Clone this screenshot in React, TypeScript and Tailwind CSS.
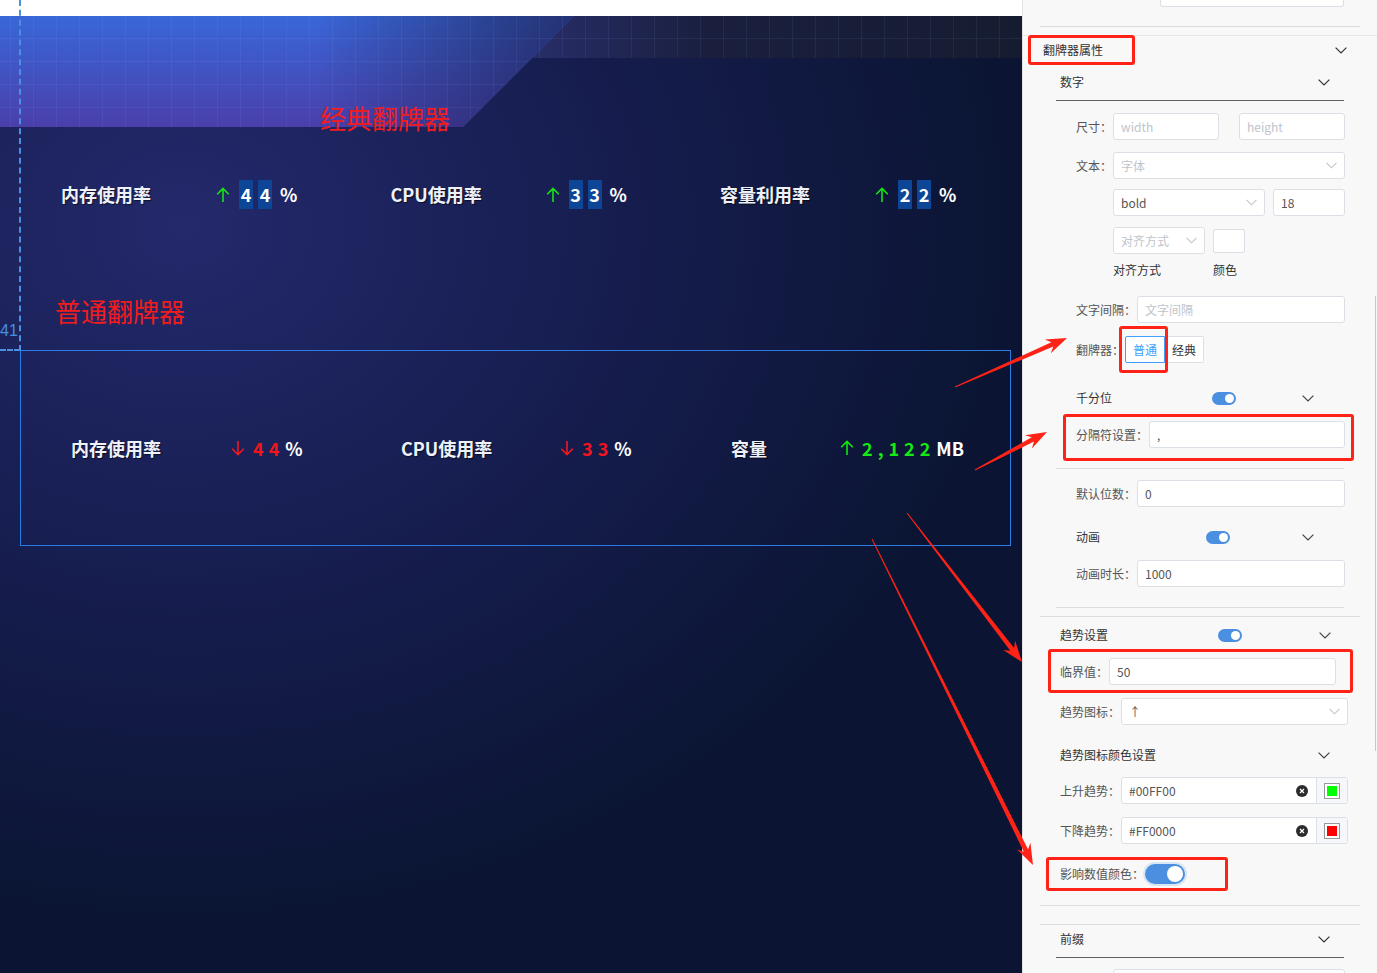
import React from 'react';
import { clsx, type ClassValue } from 'clsx';
import { twMerge } from 'tailwind-merge';

function cn(...inputs: ClassValue[]) {
  return twMerge(clsx(inputs));
}

const font = "font-['Noto_Sans_CJK_SC',sans-serif]";

const UpArrow = () => (
  <svg width="14" height="16" viewBox="0 0 14 16" className="shrink-0">
    <path d="M7 1.5V15M1.2 7.3L7 1.5L12.8 7.3" stroke="#14e614" strokeWidth="1.6" fill="none" />
  </svg>
);

const DownArrow = () => (
  <svg width="14" height="16" viewBox="0 0 14 16" className="shrink-0">
    <path d="M7 1V14.5M1.2 8.7L7 14.5L12.8 8.7" stroke="#f01820" strokeWidth="1.6" fill="none" />
  </svg>
);

const classicItems = [
  { label: '内存使用率', digits: ['4', '4'] },
  { label: 'CPU使用率', digits: ['3', '3'] },
  { label: '容量利用率', digits: ['2', '2'] },
];

const normalItems = [
  { label: '内存使用率', w: 160, up: false, digits: ['4', '4'], unit: '%' },
  { label: 'CPU使用率', w: 159, up: false, digits: ['3', '3'], unit: '%' },
  { label: '容量', w: 109, up: true, digits: ['2', ',', '1', '2', '2'], unit: 'MB' },
];

const labelCls = 'shrink-0 text-[18px] font-bold text-[#eef1f8] leading-[29px] [text-shadow:1px_1px_1px_rgba(0,0,0,0.55)]';

function HeaderArt() {
  return (
    <svg width="1022" height="112" className="absolute left-0 top-0">
      <defs>
        <linearGradient id="hdrV" x1="0" y1="0" x2="0" y2="1">
          <stop offset="0" stopColor="#3967d8" />
          <stop offset="1" stopColor="#4a3fab" />
        </linearGradient>
        <linearGradient id="hdrH" x1="0" y1="0" x2="574" y2="0" gradientUnits="userSpaceOnUse">
          <stop offset="0.55" stopColor="#1c2050" stopOpacity="0" />
          <stop offset="1" stopColor="#1c2050" stopOpacity="0.75" />
        </linearGradient>
        <linearGradient id="strip" x1="500" y1="0" x2="1022" y2="0" gradientUnits="userSpaceOnUse">
          <stop offset="0" stopColor="#2a3070" />
          <stop offset="0.4" stopColor="#1a1f3e" />
          <stop offset="1" stopColor="#161c30" />
        </linearGradient>
        <pattern id="grid" x="10" y="-1" width="23" height="23" patternUnits="userSpaceOnUse">
          <path d="M0 0V23M0 0H23" stroke="rgba(150,170,255,0.16)" strokeWidth="1" fill="none" />
        </pattern>
      </defs>
      <rect x="0" y="0" width="1022" height="42" fill="url(#strip)" />
      <polygon points="0,0 574,0 463,111 0,111" fill="url(#hdrV)" />
      <polygon points="0,0 574,0 463,111 0,111" fill="url(#hdrH)" />
      <polygon points="0,0 1022,0 1022,42 532,42 463,111 0,111" fill="url(#grid)" />
    </svg>
  );
}

function Canvas() {
  return (
    <div className={cn('w-[1022px] h-[973px] flex flex-col relative shrink-0', font)}>
      <div className="h-[16px] bg-white shrink-0" />
      <div className="flex-1 relative bg-[radial-gradient(ellipse_95%_85%_at_18%_22%,#23296b_0%,#161d4e_45%,#0b1533_85%)]">
        <HeaderArt />
        <div className="relative flex flex-col">
          <div className="mt-[87px] pl-[320px] h-[30px] leading-[30px] text-[26px] text-[#f21c1c]">经典翻牌器</div>
          <div className="mt-[47px] flex pl-[61px] h-[29px] items-center">
            {classicItems.map((it) => (
              <div key={it.label} className="w-[329.5px] shrink-0 flex items-center">
                <div className={cn('w-[155px]', labelCls)}>{it.label}</div>
                <UpArrow />
                <div className="ml-[9px] flex gap-[5px]">
                  {it.digits.map((d, i) => (
                    <div key={i} className="w-[14px] h-[29px] bg-[#0d4597] text-white text-[18px] font-bold leading-[29px] text-center">
                      {d}
                    </div>
                  ))}
                </div>
                <div className="ml-[8px] text-white text-[18px] font-bold leading-[29px]">%</div>
              </div>
            ))}
          </div>
          <div className="mt-[87px] pl-[55px] h-[30px] leading-[30px] text-[26px] text-[#f21c1c]">普通翻牌器</div>
          <div className="mt-[24px] ml-[20px] w-[991px] h-[196px] border border-[#2a7be4] flex items-center pl-[50px] overflow-hidden">
            {normalItems.map((it) => (
              <div key={it.label} className="w-[330px] shrink-0 flex items-center">
                <div className={labelCls} style={{ width: it.w }}>{it.label}</div>
                {it.up ? <UpArrow /> : <DownArrow />}
                <div className="ml-[8px] flex gap-[5px]">
                  {it.digits.map((d, i) => (
                    <span key={i} className={cn('text-[18px] font-bold leading-[29px]', it.up ? 'text-[#14eb14]' : 'text-[#f4141e]')}>
                      {d}
                    </span>
                  ))}
                </div>
                <div className="ml-[6px] text-white text-[18px] font-bold leading-[29px]">{it.unit}</div>
              </div>
            ))}
          </div>
        </div>
      </div>
      {/* ruler guide */}
      <div className="absolute left-[19px] top-0 h-[351px] border-l-2 border-dashed border-[#4a8fe0]" />
      <div className="absolute left-0 top-[349px] w-[20px] border-t-2 border-dashed border-[#4a8fe0]" />
      <div className="absolute left-0 top-[321px] text-[16px] leading-[20px] text-[#4a8fe0] font-['Liberation_Sans',sans-serif]">41</div>
    </div>
  );
}

const Chevron = ({ className }: { className?: string }) => (
  <svg width="12" height="7" viewBox="0 0 12 7" className={cn('shrink-0', className)}>
    <polyline points="0.6,0.6 6,6 11.4,0.6" fill="none" stroke="currentColor" strokeWidth="1.2" />
  </svg>
);

function Label({ children, className }: { children: React.ReactNode; className?: string }) {
  return <span className={cn('shrink-0 text-[12px] leading-[20px] text-[#555] whitespace-nowrap', className)}>{children}</span>;
}

function Input({ value, placeholder, className, select }: { value?: string; placeholder?: string; className?: string; select?: boolean }) {
  return (
    <div className={cn('h-[27px] border border-[#dcdfe6] bg-white rounded-[3px] flex items-center px-[7px] text-[12px] shrink-0', className)}>
      <span className={cn('flex-1', value ? 'text-[#555]' : 'text-[#c0c4cc]')}>{value ?? placeholder}</span>
      {select && <Chevron className="text-[#c0c4cc] w-[11px]" />}
    </div>
  );
}

function Toggle({ big }: { big?: boolean }) {
  return big ? (
    <div className="shrink-0 w-[40px] h-[20px] rounded-full bg-[#4a8fe0] flex items-center justify-end p-[2px] shadow-[0_0_0_2px_rgba(74,143,224,0.18)]">
      <div className="w-[16px] h-[16px] rounded-full bg-white" />
    </div>
  ) : (
    <div className="shrink-0 w-[24px] h-[13px] rounded-full bg-[#4a8fe0] flex items-center justify-end p-[2px]">
      <div className="w-[9px] h-[9px] rounded-full bg-white" />
    </div>
  );
}

function ColorInput({ value, swatch }: { value: string; swatch: string }) {
  return (
    <div className="w-[227px] h-[27px] border border-[#dcdfe6] bg-white rounded-[3px] flex text-[12px]">
      <div className="flex-1 flex items-center pl-[7px] pr-[8px]">
        <span className="flex-1 text-[#555]">{value}</span>
        <svg width="12" height="12" viewBox="0 0 12 12">
          <circle cx="6" cy="6" r="6" fill="#2b2b2b" />
          <path d="M4 4L8 8M8 4L4 8" stroke="#fff" strokeWidth="1.3" />
        </svg>
      </div>
      <div className="w-[31px] bg-[#f5f7fa] border-l border-[#dcdfe6] flex items-center justify-center">
        <div className="w-[16px] h-[16px] border border-[#999] p-[2px] bg-white">
          <div className="w-full h-full" style={{ background: swatch }} />
        </div>
      </div>
    </div>
  );
}

function Panel() {
  return (
    <div className={cn('w-[355px] h-[973px] bg-[#f8f8f8] border-l border-[#e2e2e2] flex flex-col relative overflow-hidden shrink-0 [&>*]:shrink-0', font)}>
      <div className="ml-[137px] w-[184px] h-[7px] border border-t-0 border-[#dcdfe6] bg-white rounded-b-[3px]" />
      <div className="mt-[19px] mx-[17px] h-px bg-[#dcdcdc]" />
      <div className="mt-[8px] h-px bg-[#e6e6e6]" />
      <div className="h-[28px] flex items-center justify-between pl-[20px] pr-[30px] text-[#333]">
        <span className="text-[12px]">翻牌器属性</span>
        <Chevron />
      </div>
      <div className="mx-[33px] h-[37px] border-b border-[#606266] flex items-center justify-between pl-[4px] pr-[14px] text-[#333]">
        <span className="text-[12px]">数字</span>
        <Chevron />
      </div>

      <div className="mt-[12px] flex items-center pl-[53px]">
        <Label>尺寸：</Label>
        <Input className="ml-px w-[106px]" placeholder="width" />
        <Input className="ml-[20px] w-[106px]" placeholder="height" />
      </div>
      <div className="mt-[12px] flex items-center pl-[53px]">
        <Label>文本：</Label>
        <Input className="ml-px w-[232px]" placeholder="字体" select />
      </div>
      <div className="mt-[10px] flex items-center pl-[90px]">
        <Input className="w-[152px]" value="bold" select />
        <Input className="ml-[8px] w-[72px]" value="18" />
      </div>
      <div className="mt-[11px] flex items-center pl-[90px]">
        <Input className="w-[92px]" placeholder="对齐方式" select />
        <div className="ml-[8px] w-[32px] h-[24px] border border-[#dcdfe6] bg-white rounded-[2px]" />
      </div>
      <div className="mt-[8px] h-[16px] flex items-center pl-[90px]">
        <Label className="w-[100px] text-[#333]">对齐方式</Label>
        <Label className="text-[#333]">颜色</Label>
      </div>
      <div className="mt-[18px] flex items-center pl-[53px]">
        <Label>文字间隔：</Label>
        <Input className="ml-px w-[208px]" placeholder="文字间隔" />
      </div>
      <div className="mt-[13px] flex items-center pl-[53px]">
        <Label>翻牌器：</Label>
        <div className="ml-px flex text-[12px]">
          <div className="w-[40px] h-[27px] border border-[#409eff] text-[#409eff] flex items-center justify-center rounded-l-[2px] bg-white">普通</div>
          <div className="w-[39px] h-[27px] border border-l-0 border-[#dcdfe6] text-[#333] flex items-center justify-center rounded-r-[2px] bg-white">经典</div>
        </div>
      </div>
      <div className="mt-[25px] h-[20px] flex items-center pl-[53px]">
        <Label className="w-[136px] text-[#333]">千分位</Label>
        <Toggle />
        <Chevron className="ml-[66px] text-[#444]" />
      </div>
      <div className="mt-[13px] flex items-center pl-[53px]">
        <Label>分隔符设置：</Label>
        <Input className="ml-px w-[196px]" value="," />
      </div>
      <div className="mt-[20px] mx-[33px] h-px bg-[#dcdcdc]" />
      <div className="mt-[11px] flex items-center pl-[53px]">
        <Label>默认位数：</Label>
        <Input className="ml-px w-[208px]" value="0" />
      </div>
      <div className="mt-[20px] h-[20px] flex items-center pl-[53px]">
        <Label className="w-[130px] text-[#333]">动画</Label>
        <Toggle />
        <Chevron className="ml-[72px] text-[#444]" />
      </div>
      <div className="mt-[13px] flex items-center pl-[53px]">
        <Label>动画时长：</Label>
        <Input className="ml-px w-[208px]" value="1000" />
      </div>
      <div className="mt-[20px] mx-[33px] h-px bg-[#dcdcdc]" />
      <div className="mt-[8px] mx-[17px] h-px bg-[#dcdcdc]" />

      <div className="mt-[8px] h-[20px] flex items-center pl-[37px]">
        <Label className="w-[158px] text-[#333]">趋势设置</Label>
        <Toggle />
        <Chevron className="ml-[77px] text-[#444]" />
      </div>
      <div className="mt-[13px] flex items-center pl-[37px]">
        <Label>临界值：</Label>
        <Input className="ml-px w-[227px]" value="50" />
      </div>
      <div className="mt-[13px] flex items-center pl-[37px]">
        <Label>趋势图标：</Label>
        <Input className="ml-px w-[227px]" value="↑" select />
      </div>
      <div className="mt-[20px] h-[20px] flex items-center justify-between pl-[37px] pr-[47px]">
        <Label className="text-[#333]">趋势图标颜色设置</Label>
        <Chevron className="text-[#444]" />
      </div>
      <div className="mt-[12px] flex items-center pl-[37px]">
        <Label>上升趋势：</Label>
        <div className="ml-px"><ColorInput value="#00FF00" swatch="#00ff00" /></div>
      </div>
      <div className="mt-[13px] flex items-center pl-[37px]">
        <Label>下降趋势：</Label>
        <div className="ml-px"><ColorInput value="#FF0000" swatch="#ff0000" /></div>
      </div>
      <div className="mt-[20px] flex items-center pl-[37px]">
        <Label>影响数值颜色：</Label>
        <div className="ml-px"><Toggle big /></div>
      </div>
      <div className="mt-[21px] mx-[17px] h-px bg-[#dcdcdc]" />
      <div className="mt-[18px] mx-[17px] h-px bg-[#dcdcdc]" />
      <div className="mx-[33px] h-[33px] border-b border-[#606266] flex items-center justify-between pl-[4px] pr-[14px] pb-[4px] text-[#333]">
        <span className="text-[12px]">前缀</span>
        <Chevron />
      </div>
      <div className="mt-[11px] ml-[90px] w-[232px] h-[27px] border border-[#dcdfe6] bg-white rounded-[3px]" />
      {/* scrollbar */}
      <div className="absolute right-[1px] top-[296px] w-px h-[455px] bg-[#c8c8c8]" />
    </div>
  );
}

function arrowPoints(x0: number, y0: number, x1: number, y1: number) {
  const dx = x1 - x0;
  const dy = y1 - y0;
  const L = Math.hypot(dx, dy);
  const ux = dx / L;
  const uy = dy / L;
  const nx = -uy;
  const ny = ux;
  const hl = 16;
  const hw = 7.5;
  const sw = 2.4;
  const nk = [x1 - ux * hl, y1 - uy * hl];
  const wg = [x1 - ux * (hl + 5), y1 - uy * (hl + 5)];
  const pts = [
    [x0 + nx * 0.5, y0 + ny * 0.5],
    [nk[0] + nx * sw, nk[1] + ny * sw],
    [wg[0] + nx * hw, wg[1] + ny * hw],
    [x1, y1],
    [wg[0] - nx * hw, wg[1] - ny * hw],
    [nk[0] - nx * sw, nk[1] - ny * sw],
    [x0 - nx * 0.5, y0 - ny * 0.5],
  ];
  return pts.map((p) => p.map((v) => v.toFixed(1)).join(',')).join(' ');
}

const arrows = [
  [955, 387, 1067, 338],
  [975, 470, 1047, 432],
  [907, 513, 1022, 662],
  [872, 539, 1033, 865],
];

const boxes = [
  'left-[1028px] top-[35px] w-[107px] h-[30px]',
  'left-[1119px] top-[326px] w-[49px] h-[47px]',
  'left-[1063px] top-[414px] w-[291px] h-[47px]',
  'left-[1048px] top-[649px] w-[305px] h-[44px]',
  'left-[1046px] top-[857px] w-[182px] h-[34px]',
];

export default function App() {
  return (
    <div className="w-[1377px] h-[973px] flex relative overflow-hidden">
      <Canvas />
      <Panel />
      {boxes.map((b) => (
        <div key={b} className={cn('absolute border-[3px] border-[#ff2216] rounded-[3px] pointer-events-none', b)} />
      ))}
      <svg width="1377" height="973" className="absolute left-0 top-0 pointer-events-none">
        {arrows.map((a, i) => (
          <polygon key={i} points={arrowPoints(a[0], a[1], a[2], a[3])} fill="#ff2216" />
        ))}
      </svg>
    </div>
  );
}
